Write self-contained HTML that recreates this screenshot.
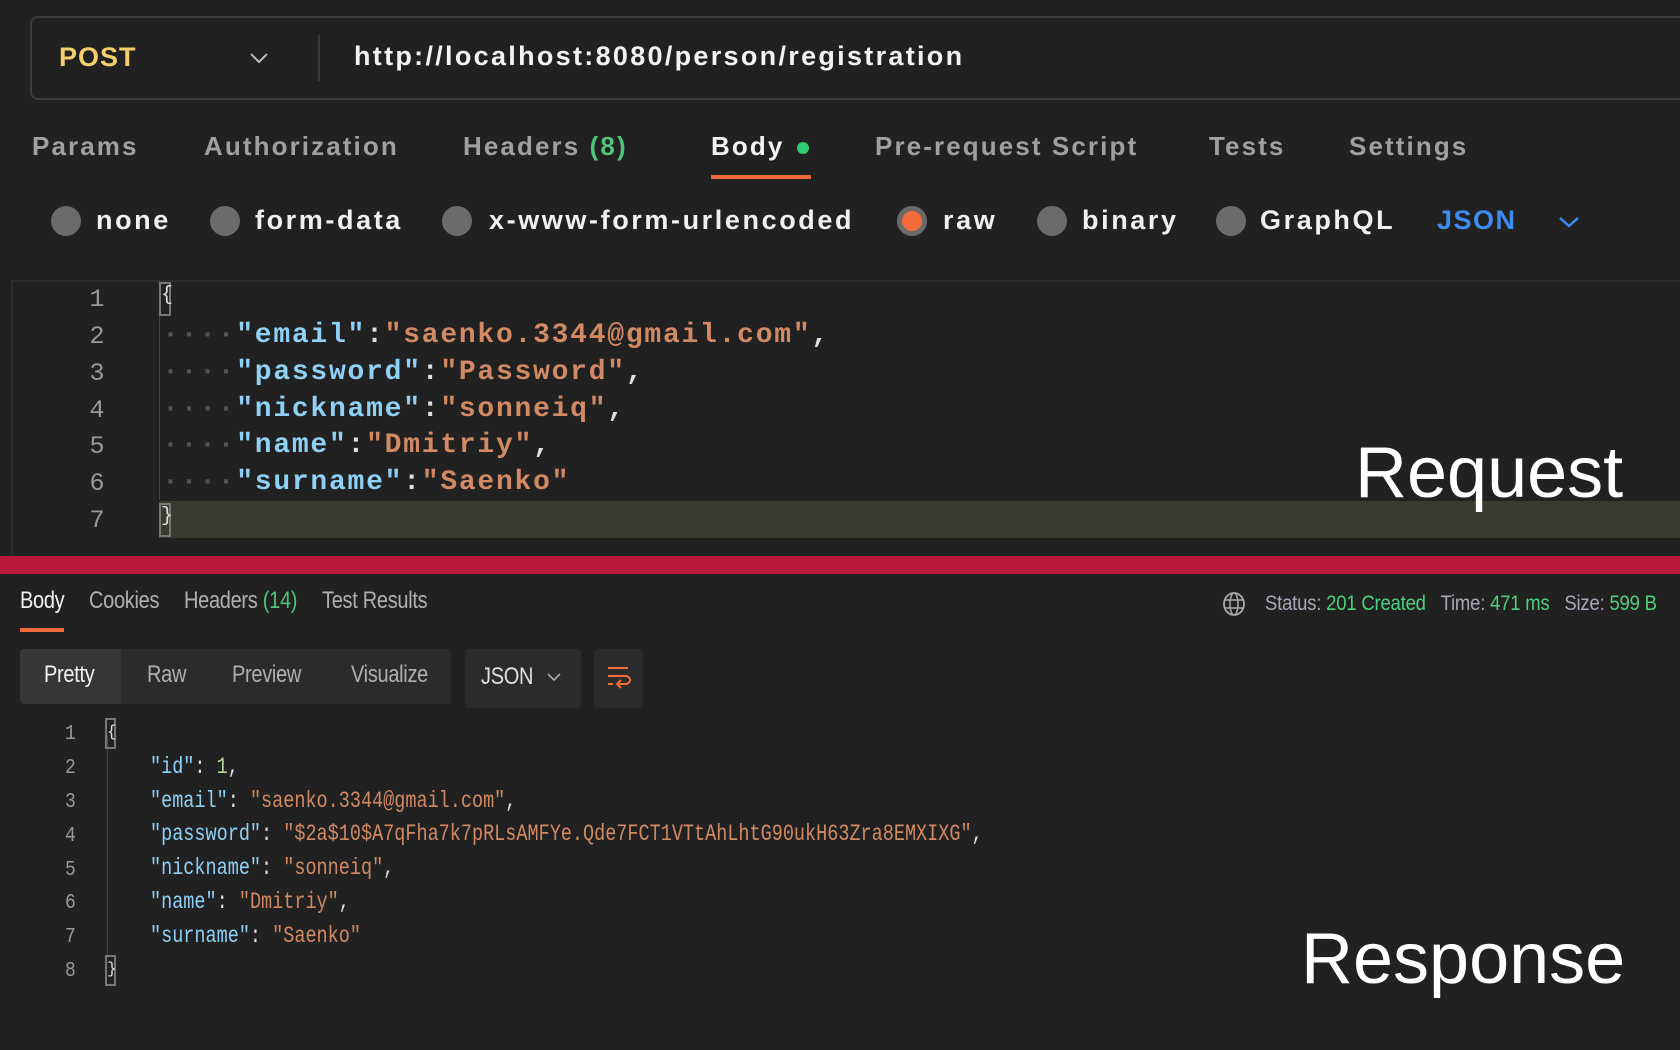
<!DOCTYPE html>
<html><head><meta charset="utf-8"><style>
*{margin:0;padding:0;box-sizing:border-box}
body{width:1680px;height:1050px;background:#212121;position:relative;overflow:hidden;font-family:"Liberation Sans",sans-serif;color:#e6e6e6}
.a{position:absolute;white-space:pre}
.urlbox{left:30px;top:16px;width:1700px;height:84px;border:2px solid #3c3c3c;border-radius:8px}
.tab{top:131px;font-size:26px;color:#a0a0a0;font-weight:bold;letter-spacing:2.1px}
.rc{width:30px;height:30px;border-radius:50%;background:#6b6b6b;top:206px}
.rt{top:205px;font-size:27px;color:#f0f0f0;font-weight:bold;letter-spacing:2.6px}
.mono{font-family:"Liberation Mono",monospace}
.ln{font-size:25px;color:#9a9a9a;width:30px;text-align:center}
.code{font-size:28px;letter-spacing:1.75px;font-weight:bold}
.k{color:#8fd0f5}.s{color:#d28a64}.p{color:#e0e0e0}.d{color:#555}
.rtab{top:590px;font-size:20px;color:#b0b0b0;transform:scaleY(1.2);transform-origin:left center;letter-spacing:-0.3px}
.r2{font-size:18.5px;transform:scaleY(1.25);transform-origin:left center}
.rln{font-size:18px;color:#9a9a9a;transform:scaleY(1.2)}
.brace{border:2px solid #777;width:12px;height:30px;font-size:20px;line-height:24px;text-align:center;color:#e0e0e0}
</style></head><body>
<div class="a urlbox"></div>
<div class="a" style="left:59px;top:42px;font-size:27px;font-weight:bold;color:#f2cf6a;letter-spacing:1px">POST</div>
<svg class="a" style="left:249px;top:52px" width="20" height="12"><path d="M2 2 L10 10 L18 2" stroke="#bbb" stroke-width="2" fill="none"/></svg>
<div class="a" style="left:318px;top:35px;width:2px;height:46px;background:#3a3a3a"></div>
<div class="a" style="left:354px;top:41px;font-size:27px;color:#f2f2f2;font-weight:bold;letter-spacing:2.3px">http://localhost:8080/person/registration</div>

<div class="a tab" style="left:32px">Params</div>
<div class="a tab" style="left:204px">Authorization</div>
<div class="a tab" style="left:463px">Headers <span style="color:#4fc47a">(8)</span></div>
<div class="a tab" style="left:711px;color:#f2f2f2">Body</div>
<div class="a" style="left:797px;top:142px;width:12px;height:12px;border-radius:50%;background:#2ecc71"></div>
<div class="a" style="left:711px;top:175px;width:100px;height:4px;background:#f26b3a"></div>
<div class="a tab" style="left:875px">Pre-request Script</div>
<div class="a tab" style="left:1209px">Tests</div>
<div class="a tab" style="left:1349px">Settings</div>

<div class="a rc" style="left:51px"></div><div class="a rt" style="left:96px">none</div>
<div class="a rc" style="left:210px"></div><div class="a rt" style="left:255px">form-data</div>
<div class="a rc" style="left:442px"></div><div class="a rt" style="left:489px">x-www-form-urlencoded</div>
<div class="a rc" style="left:897px;background:#f26b3a;border:5px solid #6b6b6b"></div><div class="a rt" style="left:943px">raw</div>
<div class="a rc" style="left:1037px"></div><div class="a rt" style="left:1082px">binary</div>
<div class="a rc" style="left:1216px"></div><div class="a rt" style="left:1260px">GraphQL</div>
<div class="a rt" style="left:1437px;color:#3d8cf0;font-weight:bold;letter-spacing:1.5px">JSON</div>
<svg class="a" style="left:1558px;top:216px" width="22" height="12"><path d="M2 2 L11 10 L20 2" stroke="#3d8cf0" stroke-width="2.5" fill="none"/></svg>

<div class="a" style="left:11px;top:280px;width:1680px;height:2px;background:#2c2c2c"></div>
<div class="a" style="left:11px;top:280px;width:2px;height:276px;background:#2c2c2c"></div>
<div class="a" style="left:159px;top:501px;width:1530px;height:37px;background:#3a3a30"></div>
<div class="a" style="left:159px;top:280px;width:1px;height:220px;background:#444"></div>
<div class="a mono ln" style="left:82px;top:285px">1</div>
<div class="a mono ln" style="left:82px;top:322px">2</div>
<div class="a mono ln" style="left:82px;top:359px">3</div>
<div class="a mono ln" style="left:82px;top:396px">4</div>
<div class="a mono ln" style="left:82px;top:432px">5</div>
<div class="a mono ln" style="left:82px;top:469px">6</div>
<div class="a mono ln" style="left:82px;top:506px">7</div>
<div class="a mono brace" style="left:159px;top:282px;height:34px">{</div>
<div class="a mono brace" style="left:159px;top:503px;height:34px">}</div>
<div class="a mono code" style="left:162px;top:320px"><span class="d">····</span><span class="k">"email"</span><span class="p">:</span><span class="s">"saenko.3344@gmail.com"</span><span class="p">,</span></div>
<div class="a mono code" style="left:162px;top:357px"><span class="d">····</span><span class="k">"password"</span><span class="p">:</span><span class="s">"Password"</span><span class="p">,</span></div>
<div class="a mono code" style="left:162px;top:394px"><span class="d">····</span><span class="k">"nickname"</span><span class="p">:</span><span class="s">"sonneiq"</span><span class="p">,</span></div>
<div class="a mono code" style="left:162px;top:430px"><span class="d">····</span><span class="k">"name"</span><span class="p">:</span><span class="s">"Dmitriy"</span><span class="p">,</span></div>
<div class="a mono code" style="left:162px;top:467px"><span class="d">····</span><span class="k">"surname"</span><span class="p">:</span><span class="s">"Saenko"</span></div>
<div class="a" style="left:1355px;top:432px;font-size:72px;color:#fff">Request</div>

<div class="a" style="left:0;top:556px;width:1680px;height:18px;background:#b8183a"></div>

<div class="a rtab" style="left:20px;color:#f2f2f2">Body</div>
<div class="a" style="left:20px;top:628px;width:44px;height:4px;background:#f26b3a"></div>
<div class="a rtab" style="left:89px">Cookies</div>
<div class="a rtab" style="left:184px">Headers <span style="color:#4fc47a">(14)</span></div>
<div class="a rtab" style="left:322px">Test Results</div>
<svg class="a" style="left:1222px;top:591px" width="24" height="26"><ellipse cx="12" cy="13" rx="10" ry="11" stroke="#aaa" stroke-width="1.8" fill="none"/><ellipse cx="12" cy="13" rx="4" ry="11" stroke="#aaa" stroke-width="1.5" fill="none"/><path d="M2 9H22M2 17H22" stroke="#aaa" stroke-width="1.5"/></svg>
<div class="a" style="left:1265px;top:592px;font-size:18.5px;color:#a8a8b8;transform:scaleY(1.15);letter-spacing:-0.2px">Status: <span style="color:#4fd07f">201 Created</span>&nbsp;&nbsp;&nbsp;Time: <span style="color:#4fd07f">471 ms</span>&nbsp;&nbsp;&nbsp;Size: <span style="color:#4fd07f">599 B</span></div>

<div class="a" style="left:20px;top:649px;width:431px;height:55px;background:#2b2b2b;border-radius:4px"></div>
<div class="a" style="left:20px;top:649px;width:101px;height:55px;background:#363636;border-radius:4px 0 0 4px"></div>
<div class="a rtab" style="left:44px;top:664px;color:#f2f2f2">Pretty</div>
<div class="a rtab" style="left:147px;top:664px">Raw</div>
<div class="a rtab" style="left:232px;top:664px">Preview</div>
<div class="a rtab" style="left:351px;top:664px">Visualize</div>
<div class="a" style="left:465px;top:649px;width:116px;height:59px;background:#2b2b2b;border-radius:4px"></div>
<div class="a rtab" style="left:481px;top:666px;color:#e0e0e0">JSON</div>
<svg class="a" style="left:547px;top:673px" width="14" height="9"><path d="M1 1 L7 7 L13 1" stroke="#bbb" stroke-width="1.5" fill="none"/></svg>
<div class="a" style="left:594px;top:649px;width:49px;height:59px;background:#2b2b2b;border-radius:4px"></div>
<svg class="a" style="left:606px;top:665px" width="26" height="28"><path d="M2 3H22M2 11H20a4 4 0 0 1 0 8H12M15 15l-4 4 4 4M2 19H7" stroke="#f26b3a" stroke-width="2" fill="none"/></svg>

<div class="a" style="left:107px;top:735px;width:1px;height:220px;background:#444"></div>
<div class="a mono rln" style="left:65px;top:724px">1</div>
<div class="a mono rln" style="left:65px;top:758px">2</div>
<div class="a mono rln" style="left:65px;top:792px">3</div>
<div class="a mono rln" style="left:65px;top:826px">4</div>
<div class="a mono rln" style="left:65px;top:860px">5</div>
<div class="a mono rln" style="left:65px;top:893px">6</div>
<div class="a mono rln" style="left:65px;top:927px">7</div>
<div class="a mono rln" style="left:65px;top:961px">8</div>
<div class="a mono brace" style="left:105px;top:718px;width:11px;height:31px;font-size:16px;border-width:2px">{</div>
<div class="a mono brace" style="left:105px;top:955px;width:11px;height:31px;font-size:16px;border-width:2px">}</div>
<div class="a mono r2" style="left:150px;top:757px"><span class="k">"id"</span><span class="p">: </span><span style="color:#b5d8a0">1</span><span class="p">,</span></div>
<div class="a mono r2" style="left:150px;top:791px"><span class="k">"email"</span><span class="p">: </span><span class="s">"saenko.3344@gmail.com"</span><span class="p">,</span></div>
<div class="a mono r2" style="left:150px;top:824px"><span class="k">"password"</span><span class="p">: </span><span class="s">"$2a$10$A7qFha7k7pRLsAMFYe.Qde7FCT1VTtAhLhtG90ukH63Zra8EMXIXG"</span><span class="p">,</span></div>
<div class="a mono r2" style="left:150px;top:858px"><span class="k">"nickname"</span><span class="p">: </span><span class="s">"sonneiq"</span><span class="p">,</span></div>
<div class="a mono r2" style="left:150px;top:892px"><span class="k">"name"</span><span class="p">: </span><span class="s">"Dmitriy"</span><span class="p">,</span></div>
<div class="a mono r2" style="left:150px;top:926px"><span class="k">"surname"</span><span class="p">: </span><span class="s">"Saenko"</span></div>
<div class="a" style="left:1301px;top:918px;font-size:72px;color:#fff">Response</div>
</body></html>
